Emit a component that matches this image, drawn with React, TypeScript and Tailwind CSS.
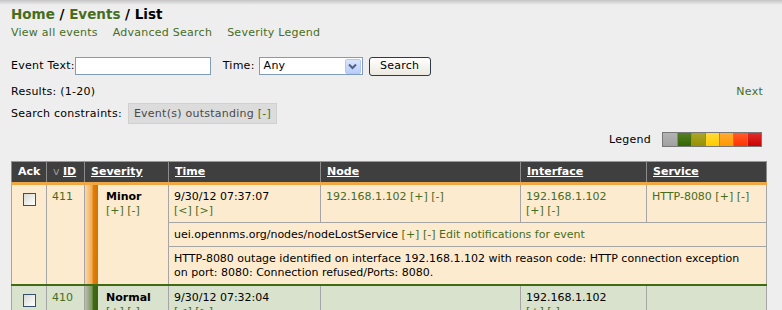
import React from "react";

const L = "text-[#466d1d]";

function Check() {
  return (
    <span className="mx-auto mt-[3px] block h-[13px] w-[13px] border border-[#34506e] bg-[linear-gradient(135deg,#d9d9d4,#ffffff)]" />
  );
}

export default function App() {
  const th =
    "bg-[#3f3f3f] text-white font-bold text-left px-[6px] py-[3px] border-x border-x-[#8c8c8c] border-t border-t-[#999999] border-b-[3px] border-b-[#efa746] align-middle";
  const td = "border border-[#a5a5a5] px-[5px] pt-[5px] pb-[4px] align-top";
  const legend = [
    "bg-[linear-gradient(#b4b4b4,#a0a0a0)]",
    "bg-[linear-gradient(#557f25,#336600)]",
    "bg-[linear-gradient(#aaa62c,#999100)]",
    "bg-[linear-gradient(#ffda3a,#ffcc00)]",
    "bg-[linear-gradient(#ffab36,#ff9900)]",
    "bg-[linear-gradient(#ff5c2c,#ff3300)]",
    "bg-[linear-gradient(#df2e2e,#cc0000)]",
  ];
  const minorBar =
    "[background:linear-gradient(to_right,#fbd8a6,#f2aa50_55%,#e07f0c_62%,#d47200)_left_top/13px_100%_no-repeat,#fdebd0]";
  const normalBar =
    "[background:linear-gradient(to_right,#b7c2ab,#7d955d_55%,#3f6a14_62%,#3a6410)_left_top/13px_100%_no-repeat,#d9e2cd]";
  const g = "border-t-[2px] border-t-[#3f6b12] pt-[4px]";

  return (
    <div className="min-h-screen bg-[#eeeeee] bg-[linear-gradient(#c4c4c4,#eeeeee_5px)] bg-no-repeat pl-[11px] pr-[16px] pt-[5px] font-['DejaVu_Sans',Verdana,sans-serif] text-[11px] leading-[14px] text-black">
      <div className="text-[13.5px] font-bold leading-[18px]">
        <span className={L}>Home</span> / <span className={L}>Events</span> / List
      </div>
      <div className="tracking-[0.25px]">
        <div className={`mt-[3px] flex gap-[15px] ${L}`}>
          <span>View all events</span>
          <span>Advanced Search</span>
          <span>Severity Legend</span>
        </div>

        <div className="mt-[17px] flex h-[18px] items-center">
          <span>Event Text:</span>
          <span className="h-[18px] w-[136px] border border-[#7f9db9] bg-white" />
          <span className="ml-[12px]">Time:</span>
          <span className="ml-[4px] flex h-[18px] w-[104px] items-center justify-between border border-[#7f9db9] bg-white pl-[4px] pr-[1px]">
            <span>Any</span>
            <span className="flex h-[15px] w-[16px] items-center justify-center rounded-[2px] border border-[#b4c6f3] bg-[linear-gradient(#dbe5fd,#b9cdfa)]">
              <svg width="9" height="7" viewBox="0 0 9 7">
                <path d="M1 1.5 L4.5 5 L8 1.5" stroke="#4d6185" strokeWidth="2" fill="none" />
              </svg>
            </span>
          </span>
          <span className="ml-[6px] flex h-[19px] w-[62px] items-center justify-center rounded-[3px] border border-[#2c3a4a] bg-[linear-gradient(#ffffff,#ece9e0)]">
            Search
          </span>
        </div>

        <div className="mt-[10px] flex justify-between">
          <span>Results: (1-20)</span>
          <span className={`pr-[3px] ${L}`}>Next</span>
        </div>

        <div className="mt-[4px] flex items-center">
          <span>Search constraints:</span>
          <span className="ml-[6px] flex h-[21px] items-center border border-[#d0d0d0] bg-[#dcdcdc] px-[5px] text-[#4a4a4a]">
            Event(s) outstanding&nbsp;<span className={L}>[-]</span>
          </span>
        </div>

        <div className="mt-[8px] flex items-center justify-end pr-[4px]">
          <span>Legend</span>
          <span className="ml-[11px] flex border border-[#777777]">
            {legend.map((c, i) => (
              <span key={i} className={`h-[13px] w-[14px] ${i > 0 ? "border-l border-l-[#888888]" : ""} ${c}`} />
            ))}
          </span>
        </div>
      </div>

      <table className="mt-[14px] w-[755px] table-fixed border-collapse border border-[#999999]">
        <colgroup>
          <col className="w-[35px]" />
          <col className="w-[38px]" />
          <col className="w-[84px]" />
          <col className="w-[152px]" />
          <col className="w-[200px]" />
          <col className="w-[126px]" />
          <col className="w-[120px]" />
        </colgroup>
        <thead>
          <tr>
            <th className={th}>Ack</th>
            <th className={th}>
              <span className="font-normal text-[#9a9a9a]">v </span>
              <span className="underline">ID</span>
            </th>
            <th className={th}><span className="underline">Severity</span></th>
            <th className={th}><span className="underline">Time</span></th>
            <th className={th}><span className="underline">Node</span></th>
            <th className={th}><span className="underline">Interface</span></th>
            <th className={th}><span className="underline">Service</span></th>
          </tr>
        </thead>
        <tbody>
          <tr className="bg-[#fdebd0]">
            <td rowSpan={3} className={td}><Check /></td>
            <td rowSpan={3} className={`${td} ${L}`}>411</td>
            <td rowSpan={3} className={`${td} pl-[21px] ${minorBar}`}>
              <div className="font-bold">Minor</div>
              <div className={L}>[+] [-]</div>
            </td>
            <td className={td}>
              9/30/12 07:37:07
              <div className={L}>[&lt;] [&gt;]</div>
            </td>
            <td className={`${td} ${L}`}>192.168.1.102 [+] [-]</td>
            <td className={`${td} ${L}`}>
              192.168.1.102
              <br />
              [+] [-]
            </td>
            <td className={`${td} ${L}`}>HTTP-8080 [+] [-]</td>
          </tr>
          <tr className="bg-[#fdebd0]">
            <td colSpan={4} className={`${td} pt-[4px] pb-[3px]`}>
              uei.opennms.org/nodes/nodeLostService{" "}
              <span className={L}>[+] [-] Edit notifications for event</span>
            </td>
          </tr>
          <tr className="bg-[#fdebd0]">
            <td colSpan={4} className={`${td} pt-[4px] pb-[1px]`}>
              <span className="whitespace-nowrap">
                HTTP-8080 outage identified on interface 192.168.1.102 with reason code: HTTP connection exception
              </span>
              <br />
              on port: 8080: Connection refused/Ports: 8080.
            </td>
          </tr>

          <tr className="bg-[#d9e2cd]">
            <td rowSpan={3} className={`${td} ${g}`}><Check /></td>
            <td rowSpan={3} className={`${td} ${g} ${L}`}>410</td>
            <td rowSpan={3} className={`${td} ${g} pl-[21px] ${normalBar}`}>
              <div className="font-bold">Normal</div>
              <div className={L}>[+] [-]</div>
            </td>
            <td className={`${td} ${g}`}>
              9/30/12 07:32:04
              <div className={L}>[&lt;] [&gt;]</div>
            </td>
            <td className={`${td} ${g}`}></td>
            <td className={`${td} ${g}`}>
              192.168.1.102
              <br />
              <span className={L}>[+] [-]</span>
            </td>
            <td className={`${td} ${g}`}></td>
          </tr>
          <tr className="bg-[#d9e2cd]">
            <td colSpan={4} className={`${td} pt-[4px]`}>
              uei.opennms.org/nodes/interfaceUp{" "}
              <span className={L}>[+] [-] Edit notifications for event</span>
            </td>
          </tr>
          <tr className="bg-[#d9e2cd]">
            <td colSpan={4} className={`${td} pt-[4px]`}>
              Interface 192.168.1.102 is up.
            </td>
          </tr>
        </tbody>
      </table>
    </div>
  );
}
